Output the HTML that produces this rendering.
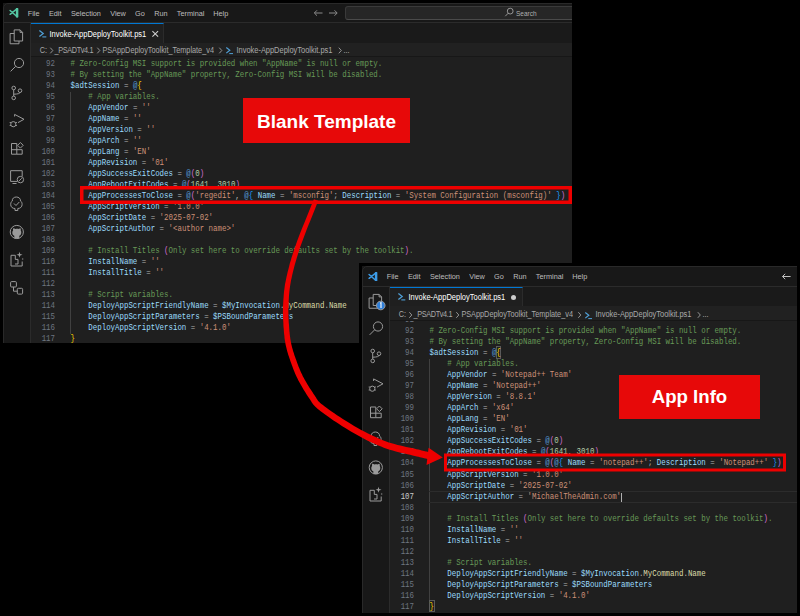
<!DOCTYPE html>
<html><head><meta charset="utf-8"><style>
html,body{margin:0;padding:0;background:#000;width:800px;height:616px;overflow:hidden;position:relative}
.win{position:absolute;overflow:hidden;background:#1f1f1f;font-family:"Liberation Sans",sans-serif}
.tb{position:absolute;left:0;top:0;right:0;background:#181818;border-bottom:1px solid #2b2b2b}
.mi{position:absolute;font-size:7.3px;line-height:8px;color:#bdbdbd;white-space:pre;transform:scaleY(1.06)}
.ab{position:absolute;left:0;width:27px;bottom:0;background:#181818;border-right:1px solid #2b2b2b}
.tabs{position:absolute;left:28px;right:0;background:#1a1a1a}
.tab{position:absolute;left:28px;width:132px;background:#1f1f1f;border-top:1px solid #0078d4;border-right:1px solid #2b2b2b}
.tabtitle{position:absolute;left:46.5px;font-size:7.5px;line-height:8px;color:#ffffff;white-space:pre;transform:scaleY(1.18)}
.psicon{position:absolute;font-family:"Liberation Mono",monospace;font-size:7.5px;line-height:8px;color:#3ca5d8;font-weight:bold}
.tabx{position:absolute;font-size:8px;line-height:10px;color:#cccccc}
.bc{position:absolute;font-size:7.3px;line-height:8px;color:#a9a9a9;white-space:pre;transform:scaleY(1.12);transform-origin:0 50%}
.chev{color:#a9a9a9}
.ln{position:absolute;font-family:"Liberation Mono",monospace;font-size:7.43px;line-height:11px;text-align:right;white-space:pre;transform:scaleY(1.17);transform-origin:0 60%}
.cl{position:absolute;font-family:"Liberation Mono",monospace;font-size:7.437px;line-height:11px;white-space:pre;transform:scaleY(1.17);transform-origin:0 60%}
.label{position:absolute;background:#e70909;color:#fff;font-family:"Liberation Sans",sans-serif;font-weight:bold;text-align:center}
</style></head><body>
<div class="win" style="left:3px;top:3px;width:569px;height:340px">
<div class="tb" style="height:19px"></div>
<svg style="position:absolute;left:5.5px;top:5.1px" width="10" height="9.5" viewBox="0 0 10 9.5" fill="none" stroke="#55c6a3" stroke-linecap="round"><path d="M7.6 1.2L1.1 6.3 M7.6 8.3L1.1 2.5" stroke-width="1.5"/><path d="M8.1 0.9V8.6" stroke-width="2.5"/></svg>
<span class="mi" style="left:24.7px;top:7.0px">File</span><span class="mi" style="left:45.9px;top:7.0px">Edit</span><span class="mi" style="left:67.9px;top:7.0px">Selection</span><span class="mi" style="left:107.2px;top:7.0px">View</span><span class="mi" style="left:132px;top:7.0px">Go</span><span class="mi" style="left:151.2px;top:7.0px">Run</span><span class="mi" style="left:173.8px;top:7.0px">Terminal</span><span class="mi" style="left:210.3px;top:7.0px">Help</span>
<svg style="position:absolute;left:0;top:0" width="569" height="20" fill="none" stroke="#8a8a8a" stroke-width="1"><path d="M311.5 10H319.5 M314 7.3L311.3 10L314 12.7 M326 10H334 M331.5 7.3L334.2 10L331.5 12.7"/></svg>
<div style="position:absolute;left:342px;top:3.4px;width:300px;height:11.4px;background:#262626;border:1px solid #3a3a3a;border-bottom-color:#4a4a4a;border-radius:3px"></div>
<svg style="position:absolute;left:0;top:0" width="569" height="20" fill="none" stroke="#a0a0a0" stroke-width="0.9"><circle cx="507.2" cy="8.1" r="2.9"/><path d="M505.2 10.2L502.3 13.2"/></svg>
<div class="mi" style="left:513px;top:7.2px;color:#b0b0b0;font-size:6.5px;transform:scaleY(1.2)">Search</div>
<div class="ab" style="top:20px"></div>
<svg style="position:absolute;left:0;top:0" width="28" height="340" fill="none" stroke="#9a9a9a" stroke-width="1"><g transform="translate(13.5 34)"><path d="M-2.3 -7.1H3.6L6.1 -4.6V4H-2.3Z M3.6 -7.1V-4.6H6.1"/><path d="M-2.3 -3.5H-6.4V6.75H2.5V4"/></g><g transform="translate(13.5 61)"><circle cx="2.5" cy="-1" r="4.6"/><path d="M-0.8 2.3L-5.9 7.4"/></g><g transform="translate(13.5 90)"><circle cx="-2.8" cy="-5" r="1.8"/><circle cx="-2.8" cy="4.9" r="1.8"/><circle cx="3.5" cy="-2.3" r="1.8"/><path d="M-2.8 -3.2V3.1 M3.5 -0.5Q3.5 1 -2.8 1.2"/></g><g transform="translate(13.5 117)"><path d="M-1.9 -3.5V-5.6L7.5 -0.7L1.5 2.6"/><circle cx="-3.2" cy="4.2" r="2.6"/><path d="M-6.8 2.5h1.2 M-6.8 5.5h1.2 M-0.8 2.5h1.2 M-0.8 5.5h1.2"/></g><g transform="translate(13.5 145.5)"><path d="M-5 -5H0.3V5.7H-5Z M-5 1.2H5.7V5.7H0.3"/><path d="M3.9 -6L6.7 -3.2L3.9 -0.4L1.1 -3.2Z"/></g><g transform="translate(13.5 173)"><path d="M0.5 5.4H-5.9V-5.3H5.7V0.4 M-4 7.5H0"/><circle cx="3.9" cy="3.6" r="3.2"/><path d="M2.6 4.9L5.2 2.3"/></g><g transform="translate(13.5 201)"><path d="M-1.5 6.5V4.5C-4 4.5 -5.8 3 -5.8 0.5C-5.8 -1.5 -5 -2.5 -4.2 -3C-4.5 -5.5 -2.5 -7 -0.2 -7C2.2 -7 4.2 -5.5 4 -3C5 -2.5 5.6 -1.3 5.6 0.5C5.6 3 3.6 4.5 1.3 4.5V6.5Z M-2.5 -0.5L-0.5 1.5L2.8 -2"/></g><g transform="translate(13.5 229)"><circle cx="0.3" cy="0" r="6.6"/><path fill="#9a9a9a" stroke="none" d="M-2.2 6.4V3.8C-3.8 3.4 -4.2 2.2 -4.2 0.6C-4.2 -0.4 -3.8 -1.1 -3.4 -1.5C-3.6 -2.2 -3.6 -3.2 -3.2 -3.8C-2.4 -3.8 -1.6 -3.3 -1.1 -2.9C0.4 -3.3 1.2 -3.3 2.2 -2.9C2.8 -3.4 3.4 -3.8 4 -3.8C4.4 -3.1 4.4 -2.1 4.2 -1.5C4.6 -1.1 4.8 -0.3 4.8 0.6C4.8 2.2 4.2 3.4 2.8 3.8V6.4Z"/></g><g transform="translate(13.5 257)"><path d="M-1.2 -4.7H-5.5V6H5.7V1.5 M-1.2 -4.7V-0.6H1.5V4H-1.5"/><path fill="#9a9a9a" stroke="none" d="M3 -8.2L3.7 -5.9L6 -5.2L3.7 -4.5L3 -2.2L2.3 -4.5L0 -5.2L2.3 -5.9Z M6.3 -2.2L6.6 -1.3L7.5 -1L6.6 -0.7L6.3 0.2L6 -0.7L5.1 -1L6 -1.3Z"/></g><g transform="translate(13.5 284)"><rect x="-5.9" y="-5.4" width="5.8" height="5.4" rx="1"/><rect x="0.8" y="1.3" width="5.3" height="5.8" rx="1"/><path d="M-3 0V4.2H0.8"/></g></svg>
<div class="tabs" style="top:20px;height:20px"></div>
<div class="tab" style="top:20px;height:20px"></div>
<div class="tabtitle" style="top:27.5px">Invoke-AppDeployToolkit.ps1</div>
<svg style="position:absolute;left:32.7px;top:24.5px" width="12" height="12" fill="none" stroke="#4f9fd6"><path d="M3.4 2.5L7.2 5.5L3.4 8.5" stroke-width="1.3"/><path d="M6.3 8.9H10.3" stroke-width="1.1"/></svg>
<svg style="position:absolute;left:0;top:0" width="170" height="45" fill="none" stroke="#d0d0d0" stroke-width="1.05"><path d="M149.4 28.2L155.1 33.6 M155.1 28.2L149.4 33.6"/></svg>
<div style="position:absolute;left:28px;right:0;top:40px;height:13px;background:#212121;border-bottom:1.2px solid #171717"></div>
<div class="bc" style="top:43.5px;left:36.75px;font-size:7.3px">C:</div>
<div class="bc" style="top:43.5px;left:51.6px;font-size:7.3px;letter-spacing:-0.36px">_PSADTv4.1</div>
<div class="bc" style="top:43.5px;left:99.4px;font-size:7.3px">PSAppDeployToolkit_Template_v4</div>
<div class="bc" style="top:43.5px;left:233.5px;font-size:7.45px">Invoke-AppDeployToolkit.ps1</div>
<div class="bc" style="top:43.5px;left:340.5px;font-size:7.3px">...</div>
<svg style="position:absolute;left:0;top:0" width="400" height="60" fill="none" stroke="#a0a0a0" stroke-width="0.9"><path d="M47.3 44.7L49.8 47.5L47.3 50.3"/><path d="M94.3 44.7L96.8 47.5L94.3 50.3"/><path d="M216.3 44.7L218.8 47.5L216.3 50.3"/><path d="M335.8 44.7L338.3 47.5L335.8 50.3"/></svg>
<svg style="position:absolute;left:222px;top:43.0px" width="12" height="12" fill="none" stroke="#4f9fd6"><path d="M1.3 1.5L4.8 4.3L1.3 7.1" stroke-width="1.2"/><path d="M4.3 7.6H8" stroke-width="1"/></svg>
<div style="position:absolute;left:66.5px;top:89.0px;width:1px;height:242px;background:#404040"></div>
<div class="ln" style="top:56.0px;right:calc(100% - 52px);color:#6e7681">92</div>
<div class="cl" style="top:56.0px;left:67.5px"><span style="color:#679a57"># Zero-Config MSI support is provided when &quot;AppName&quot; is null or empty.</span></div>
<div class="ln" style="top:67.0px;right:calc(100% - 52px);color:#6e7681">93</div>
<div class="cl" style="top:67.0px;left:67.5px"><span style="color:#679a57"># By setting the &quot;AppName&quot; property, Zero-Config MSI will be disabled.</span></div>
<div class="ln" style="top:78.0px;right:calc(100% - 52px);color:#6e7681">94</div>
<div class="cl" style="top:78.0px;left:67.5px"><span style="color:#9cdcfe">$adtSession</span><span style="color:#b4b4b4"> = </span><span style="color:#569cd6">@</span><span style="color:#ffd700">{</span></div>
<div class="ln" style="top:89.0px;right:calc(100% - 52px);color:#6e7681">95</div>
<div class="cl" style="top:89.0px;left:67.5px"><span style="color:#cccccc">    </span><span style="color:#679a57"># App variables.</span></div>
<div class="ln" style="top:100.0px;right:calc(100% - 52px);color:#6e7681">96</div>
<div class="cl" style="top:100.0px;left:67.5px"><span style="color:#cccccc">    </span><span style="color:#9cdcfe">AppVendor</span><span style="color:#b4b4b4"> = </span><span style="color:#ce9178">&#x27;&#x27;</span></div>
<div class="ln" style="top:111.0px;right:calc(100% - 52px);color:#6e7681">97</div>
<div class="cl" style="top:111.0px;left:67.5px"><span style="color:#cccccc">    </span><span style="color:#9cdcfe">AppName</span><span style="color:#b4b4b4"> = </span><span style="color:#ce9178">&#x27;&#x27;</span></div>
<div class="ln" style="top:122.0px;right:calc(100% - 52px);color:#6e7681">98</div>
<div class="cl" style="top:122.0px;left:67.5px"><span style="color:#cccccc">    </span><span style="color:#9cdcfe">AppVersion</span><span style="color:#b4b4b4"> = </span><span style="color:#ce9178">&#x27;&#x27;</span></div>
<div class="ln" style="top:133.0px;right:calc(100% - 52px);color:#6e7681">99</div>
<div class="cl" style="top:133.0px;left:67.5px"><span style="color:#cccccc">    </span><span style="color:#9cdcfe">AppArch</span><span style="color:#b4b4b4"> = </span><span style="color:#ce9178">&#x27;&#x27;</span></div>
<div class="ln" style="top:144.0px;right:calc(100% - 52px);color:#6e7681">100</div>
<div class="cl" style="top:144.0px;left:67.5px"><span style="color:#cccccc">    </span><span style="color:#9cdcfe">AppLang</span><span style="color:#b4b4b4"> = </span><span style="color:#ce9178">&#x27;EN&#x27;</span></div>
<div class="ln" style="top:155.0px;right:calc(100% - 52px);color:#6e7681">101</div>
<div class="cl" style="top:155.0px;left:67.5px"><span style="color:#cccccc">    </span><span style="color:#9cdcfe">AppRevision</span><span style="color:#b4b4b4"> = </span><span style="color:#ce9178">&#x27;01&#x27;</span></div>
<div class="ln" style="top:166.0px;right:calc(100% - 52px);color:#6e7681">102</div>
<div class="cl" style="top:166.0px;left:67.5px"><span style="color:#cccccc">    </span><span style="color:#9cdcfe">AppSuccessExitCodes</span><span style="color:#b4b4b4"> = </span><span style="color:#569cd6">@</span><span style="color:#da70d6">(</span><span style="color:#b5cea8">0</span><span style="color:#da70d6">)</span></div>
<div class="ln" style="top:177.0px;right:calc(100% - 52px);color:#6e7681">103</div>
<div class="cl" style="top:177.0px;left:67.5px"><span style="color:#cccccc">    </span><span style="color:#9cdcfe">AppRebootExitCodes</span><span style="color:#b4b4b4"> = </span><span style="color:#569cd6">@</span><span style="color:#da70d6">(</span><span style="color:#b5cea8">1641</span><span style="color:#b4b4b4">, </span><span style="color:#b5cea8">3010</span><span style="color:#da70d6">)</span></div>
<div class="ln" style="top:188.0px;right:calc(100% - 52px);color:#6e7681">104</div>
<div class="cl" style="top:188.0px;left:67.5px"><span style="color:#cccccc">    </span><span style="color:#9cdcfe">AppProcessesToClose</span><span style="color:#b4b4b4"> = </span><span style="color:#569cd6">@</span><span style="color:#da70d6">(</span><span style="color:#ce9178">&#x27;regedit&#x27;</span><span style="color:#b4b4b4">, </span><span style="color:#569cd6">@</span><span style="color:#179fff">{</span><span style="color:#b4b4b4"> </span><span style="color:#9cdcfe">Name</span><span style="color:#b4b4b4"> = </span><span style="color:#ce9178">&#x27;msconfig&#x27;</span><span style="color:#b4b4b4">; </span><span style="color:#9cdcfe">Description</span><span style="color:#b4b4b4"> = </span><span style="color:#ce9178">&#x27;System Configuration (msconfig)&#x27;</span><span style="color:#b4b4b4"> </span><span style="color:#179fff">}</span><span style="color:#da70d6">)</span></div>
<div class="ln" style="top:199.0px;right:calc(100% - 52px);color:#6e7681">105</div>
<div class="cl" style="top:199.0px;left:67.5px"><span style="color:#cccccc">    </span><span style="color:#9cdcfe">AppScriptVersion</span><span style="color:#b4b4b4"> = </span><span style="color:#ce9178">&#x27;1.0.0&#x27;</span></div>
<div class="ln" style="top:210.0px;right:calc(100% - 52px);color:#6e7681">106</div>
<div class="cl" style="top:210.0px;left:67.5px"><span style="color:#cccccc">    </span><span style="color:#9cdcfe">AppScriptDate</span><span style="color:#b4b4b4"> = </span><span style="color:#ce9178">&#x27;2025-07-02&#x27;</span></div>
<div class="ln" style="top:221.0px;right:calc(100% - 52px);color:#6e7681">107</div>
<div class="cl" style="top:221.0px;left:67.5px"><span style="color:#cccccc">    </span><span style="color:#9cdcfe">AppScriptAuthor</span><span style="color:#b4b4b4"> = </span><span style="color:#ce9178">&#x27;&lt;author name&gt;&#x27;</span></div>
<div class="ln" style="top:232.0px;right:calc(100% - 52px);color:#6e7681">108</div>
<div class="cl" style="top:232.0px;left:67.5px"></div>
<div class="ln" style="top:243.0px;right:calc(100% - 52px);color:#6e7681">109</div>
<div class="cl" style="top:243.0px;left:67.5px"><span style="color:#cccccc">    </span><span style="color:#679a57"># Install Titles </span><span style="color:#da70d6">(</span><span style="color:#679a57">Only set here to override defaults set by the toolkit</span><span style="color:#da70d6">)</span><span style="color:#679a57">.</span></div>
<div class="ln" style="top:254.0px;right:calc(100% - 52px);color:#6e7681">110</div>
<div class="cl" style="top:254.0px;left:67.5px"><span style="color:#cccccc">    </span><span style="color:#9cdcfe">InstallName</span><span style="color:#b4b4b4"> = </span><span style="color:#ce9178">&#x27;&#x27;</span></div>
<div class="ln" style="top:265.0px;right:calc(100% - 52px);color:#6e7681">111</div>
<div class="cl" style="top:265.0px;left:67.5px"><span style="color:#cccccc">    </span><span style="color:#9cdcfe">InstallTitle</span><span style="color:#b4b4b4"> = </span><span style="color:#ce9178">&#x27;&#x27;</span></div>
<div class="ln" style="top:276.0px;right:calc(100% - 52px);color:#6e7681">112</div>
<div class="cl" style="top:276.0px;left:67.5px"></div>
<div class="ln" style="top:287.0px;right:calc(100% - 52px);color:#6e7681">113</div>
<div class="cl" style="top:287.0px;left:67.5px"><span style="color:#cccccc">    </span><span style="color:#679a57"># Script variables.</span></div>
<div class="ln" style="top:298.0px;right:calc(100% - 52px);color:#6e7681">114</div>
<div class="cl" style="top:298.0px;left:67.5px"><span style="color:#cccccc">    </span><span style="color:#9cdcfe">DeployAppScriptFriendlyName</span><span style="color:#b4b4b4"> = </span><span style="color:#9cdcfe">$MyInvocation</span><span style="color:#b4b4b4">.</span><span style="color:#dcdcaa">MyCommand</span><span style="color:#b4b4b4">.</span><span style="color:#dcdcaa">Name</span></div>
<div class="ln" style="top:309.0px;right:calc(100% - 52px);color:#6e7681">115</div>
<div class="cl" style="top:309.0px;left:67.5px"><span style="color:#cccccc">    </span><span style="color:#9cdcfe">DeployAppScriptParameters</span><span style="color:#b4b4b4"> = </span><span style="color:#9cdcfe">$PSBoundParameters</span></div>
<div class="ln" style="top:320.0px;right:calc(100% - 52px);color:#6e7681">116</div>
<div class="cl" style="top:320.0px;left:67.5px"><span style="color:#cccccc">    </span><span style="color:#9cdcfe">DeployAppScriptVersion</span><span style="color:#b4b4b4"> = </span><span style="color:#ce9178">&#x27;4.1.0&#x27;</span></div>
<div class="ln" style="top:331.0px;right:calc(100% - 52px);color:#6e7681">117</div>
<div class="cl" style="top:331.0px;left:67.5px"><span style="color:#ffd700">}</span></div>
<div style="position:absolute;left:0;top:0;width:568px;height:339px;border:1px solid #292929;border-radius:5px 0 0 0;pointer-events:none"></div>
</div>
<div style="position:absolute;left:359px;top:263px;width:441px;height:353px;background:#000"></div>
<div class="win" style="left:362px;top:266px;width:435px;height:347px">
<div class="tb" style="height:20px"></div>
<svg style="position:absolute;left:5.8px;top:5.9px" width="10" height="9.5" viewBox="0 0 10 9.5" fill="none" stroke="#3d9be6" stroke-linecap="round"><path d="M7.6 1.2L1.1 6.3 M7.6 8.3L1.1 2.5" stroke-width="1.5"/><path d="M8.1 0.9V8.6" stroke-width="2.5"/></svg>
<span class="mi" style="left:24.7px;top:7.4px">File</span><span class="mi" style="left:45.9px;top:7.4px">Edit</span><span class="mi" style="left:67.9px;top:7.4px">Selection</span><span class="mi" style="left:107.2px;top:7.4px">View</span><span class="mi" style="left:132px;top:7.4px">Go</span><span class="mi" style="left:151.2px;top:7.4px">Run</span><span class="mi" style="left:173.8px;top:7.4px">Terminal</span><span class="mi" style="left:210.3px;top:7.4px">Help</span>
<svg style="position:absolute;left:0;top:0" width="435" height="20" fill="none" stroke="#c0c0c0" stroke-width="1"><path d="M420.5 10.5H428.6 M423.2 7.8L420.5 10.5L423.2 13.2"/></svg>
<div class="ab" style="top:21px"></div>
<svg style="position:absolute;left:0;top:0" width="28" height="340" fill="none" stroke="#9a9a9a" stroke-width="1"><g transform="translate(13.5 35.5)"><path d="M-2.3 -7.1H3.6L6.1 -4.6V4H-2.3Z M3.6 -7.1V-4.6H6.1"/><path d="M-2.3 -3.5H-6.4V6.75H2.5V4"/></g><g transform="translate(13.5 61.5)"><circle cx="2.5" cy="-1" r="4.6"/><path d="M-0.8 2.3L-5.9 7.4"/></g><g transform="translate(13.5 90)"><circle cx="-2.8" cy="-5" r="1.8"/><circle cx="-2.8" cy="4.9" r="1.8"/><circle cx="3.5" cy="-2.3" r="1.8"/><path d="M-2.8 -3.2V3.1 M3.5 -0.5Q3.5 1 -2.8 1.2"/></g><g transform="translate(13.5 118.5)"><path d="M-1.9 -3.5V-5.6L7.5 -0.7L1.5 2.6"/><circle cx="-3.2" cy="4.2" r="2.6"/><path d="M-6.8 2.5h1.2 M-6.8 5.5h1.2 M-0.8 2.5h1.2 M-0.8 5.5h1.2"/></g><g transform="translate(13.5 146)"><path d="M-5 -5H0.3V5.7H-5Z M-5 1.2H5.7V5.7H0.3"/><path d="M3.9 -6L6.7 -3.2L3.9 -0.4L1.1 -3.2Z"/></g><g transform="translate(13.5 173)"><path d="M-1.5 6.5V4.5C-4 4.5 -5.8 3 -5.8 0.5C-5.8 -1.5 -5 -2.5 -4.2 -3C-4.5 -5.5 -2.5 -7 -0.2 -7C2.2 -7 4.2 -5.5 4 -3C5 -2.5 5.6 -1.3 5.6 0.5C5.6 3 3.6 4.5 1.3 4.5V6.5Z M-2.5 -0.5L-0.5 1.5L2.8 -2"/></g><g transform="translate(13.5 201.5)"><circle cx="0.3" cy="0" r="6.6"/><path fill="#9a9a9a" stroke="none" d="M-2.2 6.4V3.8C-3.8 3.4 -4.2 2.2 -4.2 0.6C-4.2 -0.4 -3.8 -1.1 -3.4 -1.5C-3.6 -2.2 -3.6 -3.2 -3.2 -3.8C-2.4 -3.8 -1.6 -3.3 -1.1 -2.9C0.4 -3.3 1.2 -3.3 2.2 -2.9C2.8 -3.4 3.4 -3.8 4 -3.8C4.4 -3.1 4.4 -2.1 4.2 -1.5C4.6 -1.1 4.8 -0.3 4.8 0.6C4.8 2.2 4.2 3.4 2.8 3.8V6.4Z"/></g><g transform="translate(13.5 229)"><path d="M-1.2 -4.7H-5.5V6H5.7V1.5 M-1.2 -4.7V-0.6H1.5V4H-1.5"/><path fill="#9a9a9a" stroke="none" d="M3 -8.2L3.7 -5.9L6 -5.2L3.7 -4.5L3 -2.2L2.3 -4.5L0 -5.2L2.3 -5.9Z M6.3 -2.2L6.6 -1.3L7.5 -1L6.6 -0.7L6.3 0.2L6 -0.7L5.1 -1L6 -1.3Z"/></g><circle cx="18.75" cy="39.5" r="4.3" fill="#2f7fd9"/><path d="M18.1 37.3L19 36.8V42" stroke="#ffffff" stroke-width="1.1" fill="none"/></svg>
<div class="tabs" style="top:21px;height:19px"></div>
<div class="tab" style="top:21px;height:19px"></div>
<div class="tabtitle" style="top:28.1px">Invoke-AppDeployToolkit.ps1</div>
<svg style="position:absolute;left:32.7px;top:25.1px" width="12" height="12" fill="none" stroke="#4f9fd6"><path d="M3.4 2.5L7.2 5.5L3.4 8.5" stroke-width="1.3"/><path d="M6.3 8.9H10.3" stroke-width="1.1"/></svg>
<div style="position:absolute;left:149.4px;top:29.0px;width:5px;height:5px;border-radius:3px;background:#cccccc"></div>
<div class="ln" style="top:49.0px;right:calc(100% - 52px);color:#6e7681">91</div>
<div style="position:absolute;left:28px;right:0;top:40px;height:13.5px;background:#212121;border-bottom:1.2px solid #171717"></div>
<div class="bc" style="top:45px;left:36.75px;font-size:7.3px">C:</div>
<div class="bc" style="top:45px;left:51.6px;font-size:7.3px;letter-spacing:-0.36px">_PSADTv4.1</div>
<div class="bc" style="top:45px;left:99.4px;font-size:7.3px">PSAppDeployToolkit_Template_v4</div>
<div class="bc" style="top:45px;left:233.5px;font-size:7.45px">Invoke-AppDeployToolkit.ps1</div>
<div class="bc" style="top:45px;left:340.5px;font-size:7.3px">...</div>
<svg style="position:absolute;left:0;top:0" width="400" height="60" fill="none" stroke="#a0a0a0" stroke-width="0.9"><path d="M47.3 46.2L49.8 49L47.3 51.8"/><path d="M94.3 46.2L96.8 49L94.3 51.8"/><path d="M216.3 46.2L218.8 49L216.3 51.8"/><path d="M335.8 46.2L338.3 49L335.8 51.8"/></svg>
<svg style="position:absolute;left:222px;top:44.5px" width="12" height="12" fill="none" stroke="#4f9fd6"><path d="M1.3 1.5L4.8 4.3L1.3 7.1" stroke-width="1.2"/><path d="M4.3 7.6H8" stroke-width="1"/></svg>
<div style="position:absolute;left:66.5px;top:93.0px;width:1px;height:242px;background:#404040"></div>
<div style="position:absolute;left:67px;right:0;top:225.1px;height:10px;border-top:1px solid #2c2c2c;border-bottom:1px solid #2c2c2c"></div>
<div style="position:absolute;left:259px;top:226.6px;width:1px;height:9.5px;background:#b0b0b0"></div>
<div style="position:absolute;left:133.8px;top:80.2px;width:3.6px;height:10.4px;border:1px solid #5a5a5a"></div>
<div style="position:absolute;left:66.8px;top:334px;width:3.8px;height:10.4px;border:1px solid #5a5a5a"></div>
<div class="ln" style="top:60.0px;right:calc(100% - 52px);color:#6e7681">92</div>
<div class="cl" style="top:60.0px;left:67.5px"><span style="color:#679a57"># Zero-Config MSI support is provided when &quot;AppName&quot; is null or empty.</span></div>
<div class="ln" style="top:71.04px;right:calc(100% - 52px);color:#6e7681">93</div>
<div class="cl" style="top:71.04px;left:67.5px"><span style="color:#679a57"># By setting the &quot;AppName&quot; property, Zero-Config MSI will be disabled.</span></div>
<div class="ln" style="top:82.08px;right:calc(100% - 52px);color:#6e7681">94</div>
<div class="cl" style="top:82.08px;left:67.5px"><span style="color:#9cdcfe">$adtSession</span><span style="color:#b4b4b4"> = </span><span style="color:#569cd6">@</span><span style="color:#ffd700">{</span></div>
<div class="ln" style="top:93.12px;right:calc(100% - 52px);color:#6e7681">95</div>
<div class="cl" style="top:93.12px;left:67.5px"><span style="color:#cccccc">    </span><span style="color:#679a57"># App variables.</span></div>
<div class="ln" style="top:104.16px;right:calc(100% - 52px);color:#6e7681">96</div>
<div class="cl" style="top:104.16px;left:67.5px"><span style="color:#cccccc">    </span><span style="color:#9cdcfe">AppVendor</span><span style="color:#b4b4b4"> = </span><span style="color:#ce9178">&#x27;Notepad++ Team&#x27;</span></div>
<div class="ln" style="top:115.2px;right:calc(100% - 52px);color:#6e7681">97</div>
<div class="cl" style="top:115.2px;left:67.5px"><span style="color:#cccccc">    </span><span style="color:#9cdcfe">AppName</span><span style="color:#b4b4b4"> = </span><span style="color:#ce9178">&#x27;Notepad++&#x27;</span></div>
<div class="ln" style="top:126.24px;right:calc(100% - 52px);color:#6e7681">98</div>
<div class="cl" style="top:126.24px;left:67.5px"><span style="color:#cccccc">    </span><span style="color:#9cdcfe">AppVersion</span><span style="color:#b4b4b4"> = </span><span style="color:#ce9178">&#x27;8.8.1&#x27;</span></div>
<div class="ln" style="top:137.28px;right:calc(100% - 52px);color:#6e7681">99</div>
<div class="cl" style="top:137.28px;left:67.5px"><span style="color:#cccccc">    </span><span style="color:#9cdcfe">AppArch</span><span style="color:#b4b4b4"> = </span><span style="color:#ce9178">&#x27;x64&#x27;</span></div>
<div class="ln" style="top:148.32px;right:calc(100% - 52px);color:#6e7681">100</div>
<div class="cl" style="top:148.32px;left:67.5px"><span style="color:#cccccc">    </span><span style="color:#9cdcfe">AppLang</span><span style="color:#b4b4b4"> = </span><span style="color:#ce9178">&#x27;EN&#x27;</span></div>
<div class="ln" style="top:159.36px;right:calc(100% - 52px);color:#6e7681">101</div>
<div class="cl" style="top:159.36px;left:67.5px"><span style="color:#cccccc">    </span><span style="color:#9cdcfe">AppRevision</span><span style="color:#b4b4b4"> = </span><span style="color:#ce9178">&#x27;01&#x27;</span></div>
<div class="ln" style="top:170.4px;right:calc(100% - 52px);color:#6e7681">102</div>
<div class="cl" style="top:170.4px;left:67.5px"><span style="color:#cccccc">    </span><span style="color:#9cdcfe">AppSuccessExitCodes</span><span style="color:#b4b4b4"> = </span><span style="color:#569cd6">@</span><span style="color:#da70d6">(</span><span style="color:#b5cea8">0</span><span style="color:#da70d6">)</span></div>
<div class="ln" style="top:181.44px;right:calc(100% - 52px);color:#6e7681">103</div>
<div class="cl" style="top:181.44px;left:67.5px"><span style="color:#cccccc">    </span><span style="color:#9cdcfe">AppRebootExitCodes</span><span style="color:#b4b4b4"> = </span><span style="color:#569cd6">@</span><span style="color:#da70d6">(</span><span style="color:#b5cea8">1641</span><span style="color:#b4b4b4">, </span><span style="color:#b5cea8">3010</span><span style="color:#da70d6">)</span></div>
<div class="ln" style="top:192.48px;right:calc(100% - 52px);color:#6e7681">104</div>
<div class="cl" style="top:192.48px;left:67.5px"><span style="color:#cccccc">    </span><span style="color:#9cdcfe">AppProcessesToClose</span><span style="color:#b4b4b4"> = </span><span style="color:#569cd6">@</span><span style="color:#da70d6">(</span><span style="color:#569cd6">@</span><span style="color:#179fff">{</span><span style="color:#b4b4b4"> </span><span style="color:#9cdcfe">Name</span><span style="color:#b4b4b4"> = </span><span style="color:#ce9178">&#x27;notepad++&#x27;</span><span style="color:#b4b4b4">; </span><span style="color:#9cdcfe">Description</span><span style="color:#b4b4b4"> = </span><span style="color:#ce9178">&#x27;Notepad++&#x27;</span><span style="color:#b4b4b4"> </span><span style="color:#179fff">}</span><span style="color:#da70d6">)</span></div>
<div class="ln" style="top:203.52px;right:calc(100% - 52px);color:#6e7681">105</div>
<div class="cl" style="top:203.52px;left:67.5px"><span style="color:#cccccc">    </span><span style="color:#9cdcfe">AppScriptVersion</span><span style="color:#b4b4b4"> = </span><span style="color:#ce9178">&#x27;1.0.0&#x27;</span></div>
<div class="ln" style="top:214.56px;right:calc(100% - 52px);color:#6e7681">106</div>
<div class="cl" style="top:214.56px;left:67.5px"><span style="color:#cccccc">    </span><span style="color:#9cdcfe">AppScriptDate</span><span style="color:#b4b4b4"> = </span><span style="color:#ce9178">&#x27;2025-07-02&#x27;</span></div>
<div class="ln" style="top:225.6px;right:calc(100% - 52px);color:#cccccc">107</div>
<div class="cl" style="top:225.6px;left:67.5px"><span style="color:#cccccc">    </span><span style="color:#9cdcfe">AppScriptAuthor</span><span style="color:#b4b4b4"> = </span><span style="color:#ce9178">&#x27;MichaelTheAdmin.com&#x27;</span></div>
<div class="ln" style="top:236.64px;right:calc(100% - 52px);color:#6e7681">108</div>
<div class="cl" style="top:236.64px;left:67.5px"></div>
<div class="ln" style="top:247.68px;right:calc(100% - 52px);color:#6e7681">109</div>
<div class="cl" style="top:247.68px;left:67.5px"><span style="color:#cccccc">    </span><span style="color:#679a57"># Install Titles </span><span style="color:#da70d6">(</span><span style="color:#679a57">Only set here to override defaults set by the toolkit</span><span style="color:#da70d6">)</span><span style="color:#679a57">.</span></div>
<div class="ln" style="top:258.72px;right:calc(100% - 52px);color:#6e7681">110</div>
<div class="cl" style="top:258.72px;left:67.5px"><span style="color:#cccccc">    </span><span style="color:#9cdcfe">InstallName</span><span style="color:#b4b4b4"> = </span><span style="color:#ce9178">&#x27;&#x27;</span></div>
<div class="ln" style="top:269.76px;right:calc(100% - 52px);color:#6e7681">111</div>
<div class="cl" style="top:269.76px;left:67.5px"><span style="color:#cccccc">    </span><span style="color:#9cdcfe">InstallTitle</span><span style="color:#b4b4b4"> = </span><span style="color:#ce9178">&#x27;&#x27;</span></div>
<div class="ln" style="top:280.8px;right:calc(100% - 52px);color:#6e7681">112</div>
<div class="cl" style="top:280.8px;left:67.5px"></div>
<div class="ln" style="top:291.84px;right:calc(100% - 52px);color:#6e7681">113</div>
<div class="cl" style="top:291.84px;left:67.5px"><span style="color:#cccccc">    </span><span style="color:#679a57"># Script variables.</span></div>
<div class="ln" style="top:302.88px;right:calc(100% - 52px);color:#6e7681">114</div>
<div class="cl" style="top:302.88px;left:67.5px"><span style="color:#cccccc">    </span><span style="color:#9cdcfe">DeployAppScriptFriendlyName</span><span style="color:#b4b4b4"> = </span><span style="color:#9cdcfe">$MyInvocation</span><span style="color:#b4b4b4">.</span><span style="color:#dcdcaa">MyCommand</span><span style="color:#b4b4b4">.</span><span style="color:#dcdcaa">Name</span></div>
<div class="ln" style="top:313.92px;right:calc(100% - 52px);color:#6e7681">115</div>
<div class="cl" style="top:313.92px;left:67.5px"><span style="color:#cccccc">    </span><span style="color:#9cdcfe">DeployAppScriptParameters</span><span style="color:#b4b4b4"> = </span><span style="color:#9cdcfe">$PSBoundParameters</span></div>
<div class="ln" style="top:324.96px;right:calc(100% - 52px);color:#6e7681">116</div>
<div class="cl" style="top:324.96px;left:67.5px"><span style="color:#cccccc">    </span><span style="color:#9cdcfe">DeployAppScriptVersion</span><span style="color:#b4b4b4"> = </span><span style="color:#ce9178">&#x27;4.1.0&#x27;</span></div>
<div class="ln" style="top:336.0px;right:calc(100% - 52px);color:#6e7681">117</div>
<div class="cl" style="top:336.0px;left:67.5px"><span style="color:#ffd700">}</span></div>
<div style="position:absolute;left:0;top:0;width:434px;height:346px;border:1px solid #292929;border-radius:5px 0 0 0;pointer-events:none"></div>
</div>
<div class="label" style="left:243px;top:98px;width:167px;height:45px;font-size:19px;line-height:47px">Blank Template</div>
<div class="label" style="left:619px;top:375px;width:141px;height:43.5px;font-size:18.6px;line-height:44px">App Info</div>
<svg style="position:absolute;left:0;top:0" width="800" height="616">
<rect x="81.75" y="187.75" width="488.5" height="14.5" fill="none" stroke="#ee0000" stroke-width="3.5"/>
<rect x="445.5" y="455" width="339" height="15" fill="none" stroke="#ee0000" stroke-width="3"/>
<path d="M313.9 199.2 L312.3 203.0 L310.7 206.9 L309.1 210.9 L307.5 214.9 L305.9 218.9 L304.3 222.9 L302.7 226.8 L301.1 230.7 L299.6 234.5 L298.2 238.2 L296.9 241.8 L295.7 245.2 L294.5 248.5 L293.5 251.7 L292.5 254.8 L291.5 257.8 L290.7 260.8 L289.8 263.6 L289.1 266.4 L288.4 269.2 L287.7 271.8 L287.1 274.4 L286.5 277.0 L286.0 279.5 L285.5 281.9 L285.0 284.3 L284.7 286.6 L284.4 288.9 L284.1 291.0 L283.9 293.1 L283.7 295.2 L283.6 297.2 L283.4 299.2 L283.3 301.1 L283.2 303.0 L283.1 304.9 L283.0 306.8 L283.0 308.6 L282.9 310.4 L282.9 312.1 L282.9 313.8 L283.0 315.5 L283.0 317.2 L283.1 318.8 L283.2 320.4 L283.3 322.0 L283.4 323.6 L283.4 325.2 L283.5 326.8 L283.7 328.4 L283.8 329.9 L283.9 331.5 L284.0 333.1 L284.2 334.6 L284.4 336.1 L284.5 337.7 L284.7 339.2 L284.9 340.6 L285.2 342.1 L285.4 343.5 L285.7 344.9 L286.0 346.2 L286.3 347.5 L286.6 348.8 L286.9 350.0 L287.2 351.2 L287.6 352.4 L287.9 353.6 L288.3 354.9 L288.8 356.2 L289.2 357.5 L289.7 358.9 L290.2 360.4 L290.7 362.0 L291.3 363.5 L291.9 365.2 L292.5 366.8 L293.1 368.5 L293.8 370.2 L294.5 372.0 L295.2 373.7 L296.0 375.4 L296.7 377.1 L297.6 378.8 L298.4 380.5 L299.4 382.3 L300.4 384.1 L301.4 385.8 L302.4 387.6 L303.5 389.4 L304.5 391.1 L305.6 392.8 L306.6 394.4 L307.6 395.9 L308.6 397.4 L309.5 398.7 L310.2 399.8 L310.8 400.7 L311.3 401.6 L311.8 402.4 L312.3 403.1 L312.8 403.9 L313.5 404.8 L314.2 405.6 L315.1 406.6 L316.2 407.5 L317.5 408.7 L319.1 409.9 L321.0 411.4 L323.1 413.0 L325.5 414.7 L328.0 416.5 L330.7 418.4 L333.5 420.4 L336.4 422.3 L339.4 424.3 L342.3 426.2 L345.3 428.1 L348.1 429.8 L350.9 431.5 L353.6 433.0 L356.3 434.6 L359.0 436.1 L361.7 437.5 L364.5 439.0 L367.2 440.4 L370.0 441.7 L372.7 443.0 L375.5 444.3 L378.3 445.5 L381.1 446.6 L383.8 447.7 L386.7 448.8 L389.7 449.7 L392.7 450.6 L395.8 451.4 L398.8 452.2 L401.8 452.9 L404.7 453.6 L407.5 454.2 L410.1 454.8 L412.6 455.4 L414.8 455.9 L416.8 456.4 L418.5 456.8 L420.0 457.2 L421.3 457.5 L422.4 457.8 L423.4 458.0 L424.3 458.2 L425.1 458.4 L425.8 458.6 L426.6 458.8 L427.4 459.0 L428.2 459.2 L429.2 459.4 L430.8 452.6 L429.8 452.4 L429.0 452.2 L428.2 452.0 L427.4 451.8 L426.6 451.6 L425.9 451.4 L425.0 451.2 L424.0 451.0 L422.9 450.8 L421.7 450.4 L420.2 450.1 L418.4 449.6 L416.4 449.2 L414.1 448.6 L411.6 448.1 L409.0 447.5 L406.2 446.9 L403.3 446.3 L400.4 445.6 L397.5 444.9 L394.5 444.1 L391.6 443.3 L388.8 442.4 L386.2 441.5 L383.5 440.5 L380.8 439.4 L378.2 438.3 L375.5 437.1 L372.8 435.8 L370.1 434.5 L367.5 433.2 L364.8 431.8 L362.1 430.4 L359.4 428.9 L356.8 427.4 L354.1 425.9 L351.4 424.3 L348.6 422.6 L345.7 420.8 L342.8 419.0 L339.9 417.1 L337.0 415.2 L334.3 413.3 L331.6 411.4 L329.1 409.7 L326.8 408.0 L324.7 406.4 L322.9 405.1 L321.4 403.9 L320.2 402.9 L319.3 402.1 L318.7 401.4 L318.1 400.9 L317.7 400.3 L317.4 399.8 L317.0 399.2 L316.5 398.4 L316.0 397.6 L315.3 396.5 L314.5 395.3 L313.6 394.0 L312.7 392.6 L311.7 391.1 L310.7 389.5 L309.6 387.9 L308.6 386.3 L307.5 384.5 L306.5 382.8 L305.5 381.1 L304.6 379.4 L303.7 377.8 L302.8 376.2 L302.1 374.6 L301.3 373.0 L300.6 371.4 L299.9 369.7 L299.2 368.1 L298.5 366.4 L297.9 364.8 L297.3 363.2 L296.7 361.6 L296.2 360.0 L295.6 358.5 L295.1 357.1 L294.6 355.7 L294.2 354.4 L293.8 353.1 L293.4 351.9 L293.0 350.8 L292.7 349.6 L292.4 348.5 L292.1 347.4 L291.8 346.2 L291.5 345.0 L291.2 343.8 L291.0 342.5 L290.7 341.1 L290.5 339.8 L290.3 338.4 L290.1 336.9 L289.9 335.5 L289.7 334.0 L289.6 332.5 L289.4 331.0 L289.3 329.5 L289.2 327.9 L289.1 326.4 L289.0 324.8 L288.8 323.2 L288.7 321.7 L288.6 320.1 L288.6 318.5 L288.5 317.0 L288.4 315.4 L288.4 313.7 L288.4 312.1 L288.3 310.4 L288.4 308.7 L288.4 306.9 L288.5 305.1 L288.6 303.3 L288.7 301.4 L288.8 299.5 L288.9 297.5 L289.0 295.6 L289.2 293.6 L289.4 291.6 L289.6 289.5 L289.9 287.4 L290.2 285.2 L290.6 282.9 L291.0 280.5 L291.6 278.1 L292.1 275.6 L292.7 273.0 L293.3 270.4 L294.0 267.7 L294.7 265.0 L295.5 262.2 L296.4 259.3 L297.3 256.3 L298.2 253.2 L299.2 250.1 L300.3 246.8 L301.5 243.4 L302.8 239.9 L304.2 236.2 L305.6 232.4 L307.1 228.6 L308.7 224.6 L310.3 220.7 L311.9 216.7 L313.5 212.7 L315.1 208.7 L316.6 204.7 L318.1 200.8 Z" fill="#ee0000"/><path d="M442.8 457.6 L428.6 447.8 L426.5 464.9 Z" fill="#ee0000"/></svg>
</body></html>
